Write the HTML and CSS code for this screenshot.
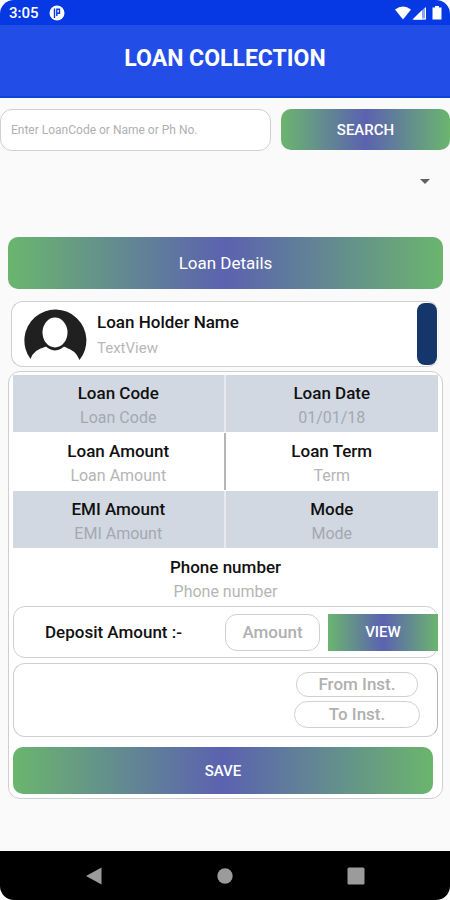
FILE: index.html
```html
<!DOCTYPE html>
<html lang="en">
<head>
<meta charset="utf-8">
<meta name="viewport" content="width=device-width, initial-scale=1">
<title>Loan Collection</title>
<link rel="stylesheet" href="styles.css">
</head>
<body>
<div class="screen">
  <div class="status">
    <span class="time">3:05</span>
    <svg class="app-icon" width="16" height="16" viewBox="0 0 16 16" aria-hidden="true"><circle cx="8" cy="8" r="7.500" fill="#fff"/><path d="M5.500 3.500V13M8.500 8.300H10.500V4.300H7.800V11" fill="none" stroke="#0638e4" stroke-width="1.400"/></svg>
    <svg class="signals" width="48" height="16" viewBox="0 0 48 16" aria-hidden="true">
      <path d="M0 4.500Q8 -1.500 16 4.500L8 14.500Z" fill="#fff"/>
      <path d="M17.500 14.500L31 1.500V14.500Z" fill="#fff" fill-opacity=".55"/><path d="M17.500 14.500L27 5.300V14.500Z" fill="#fff"/><path d="M30.500 3V14H19" fill="none" stroke="#fff"/>
      <path d="M40 1h4v1.500h2.500V14.500h-9V2.500H40Z" fill="#fff"/>
    </svg>
  </div>
  <header class="header"><h1>LOAN COLLECTION</h1></header>

  <main class="main">
    <form class="search">
      <input class="box search-input" type="text" aria-label="Loan search" placeholder="Enter LoanCode or Name or Ph No.">
      <button class="gradient search-button" type="button">SEARCH</button>
    </form>
    <div class="picker">
      <select aria-label="Loan"><option></option></select>
      <svg class="caret" width="10" height="5" viewBox="0 0 10 5" aria-hidden="true"><path d="M0 0H10L5 5Z" fill="#606060"/></svg>
    </div>

    <section class="details">
      <h2 class="gradient banner">Loan Details</h2>
      <div class="box holder">
        <svg class="avatar" width="64" height="56" viewBox="0 0 64 56" aria-hidden="true">
          <path d="M7.500 53A31 31 0 1 1 56.500 54Q53 44 41 41L23 41Q11 43 7.500 53Z" fill="#202020"/>
          <path d="M20 42L24 40Q32 47 40 40L44 42L32 50Z" fill="#fff"/>
          <ellipse cx="32" cy="27" rx="14.500" ry="17.500" fill="#202020"/>
          <ellipse cx="32" cy="26.500" rx="12.500" ry="15" fill="#fff"/>
        </svg>
        <div class="holder-text">
          <strong>Loan Holder Name</strong>
          <span class="small">TextView</span>
        </div>
        <div class="stripe"></div>
      </div>

      <div class="box card">
        <dl class="facts">
          <div class="fact split shaded"><dt>Loan Code</dt><dd>Loan Code</dd></div>
          <div class="fact shaded"><dt>Loan Date</dt><dd>01/01/18</dd></div>
          <div class="fact split"><dt>Loan Amount</dt><dd>Loan Amount</dd></div>
          <div class="fact"><dt>Loan Term</dt><dd>Term</dd></div>
          <div class="fact split shaded"><dt>EMI Amount</dt><dd>EMI Amount</dd></div>
          <div class="fact shaded"><dt>Mode</dt><dd>Mode</dd></div>
          <div class="fact wide"><dt>Phone number</dt><dd>Phone number</dd></div>
        </dl>
        <div class="box deposit">
          <label for="amount">Deposit Amount :-</label>
          <input class="box field amount" id="amount" type="text" placeholder="Amount">
          <button class="gradient view" type="button">VIEW</button>
        </div>
        <div class="box installments">
          <input class="box field from" type="text" aria-label="From installment" placeholder="From Inst.">
          <input class="box field to" type="text" aria-label="To installment" placeholder="To Inst.">
        </div>
        <button class="gradient save" type="button">SAVE</button>
      </div>
    </section>
  </main>

  <nav class="nav">
    <button type="button" aria-label="Back"><svg width="18" height="18" viewBox="0 0 18 18"><path d="M1 9L16.500 .5V17.500Z" fill="#9b9b9b"/></svg></button>
    <button type="button" aria-label="Home"><svg width="18" height="18" viewBox="0 0 18 18"><circle cx="9" cy="9" r="7.700" fill="#9b9b9b"/></svg></button>
    <button type="button" aria-label="Recent apps"><svg width="18" height="18" viewBox="0 0 18 18"><rect x=".5" y=".5" width="17" height="17" rx="1.500" fill="#9b9b9b"/></svg></button>
  </nav>
</div>
</body>
</html>
```
FILE: styles.css
```css
* { box-sizing: border-box; }
body { margin: 0; background: #fff; font-family: Roboto, "Liberation Sans", sans-serif; font-size: 17px; color: #111; }
h1, h2, dl, dd { margin: 0; }
button, input, select { font: inherit; margin: 0; }
button { border: 0; padding: 0; }

.screen { display: flex; flex-direction: column; min-height: 100vh; background: #fafafa; border-radius: 14px; overflow: hidden; }

.status { display: flex; align-items: center; height: 25px; padding: 1px 7px 0 9px; background: #0638e4; color: #fff; }
.time { font-size: 15px; font-weight: 500; }
.app-icon { margin-left: 10px; }
.signals { margin-left: auto; }

.header { display: flex; align-items: center; justify-content: center; height: 73px; padding-bottom: 4px; background: #224de6; border-bottom: 2px solid #0d43d8; color: #fff; }
.header h1 { font-size: 23px; font-weight: 700; line-height: 28px; }

.main { flex: 1; }
.box { background: #fff; border: 1px solid #cfcfcf; border-radius: 12px; }
.gradient { background: linear-gradient(90deg, #6bb56e, #5b62b0, #6bb56e); color: #fff; border-radius: 10px; font-weight: 500; text-align: center; }

.search { display: flex; gap: 10px; padding-top: 11px; }
.search-input { flex: 1; min-width: 0; height: 42px; padding: 0 10px; font-size: 12px; }
.search-button { width: 169px; height: 41px; font-size: 15px; }
::placeholder { color: #b0b0b0; opacity: 1; }

.picker { position: relative; height: 61px; }
.picker select { width: 100%; height: 61px; border: 0; background: none; appearance: none; }
.caret { position: absolute; right: 20px; top: 28px; pointer-events: none; }

.details { padding: 25px 7px 0 8px; }
.banner { height: 52px; line-height: 52px; font-size: 17px; font-weight: 400; }

.holder { display: flex; align-items: center; height: 66px; margin: 12px 4px 4px 3px; padding: 0 1px 0 11px; border-right-color: #eee; }
.holder-text { flex: 1; display: flex; flex-direction: column; gap: 5px; padding-left: 10px; }
.holder-text strong { font-weight: 500; line-height: 22px; }
.small { font-size: 15px; line-height: 20px; color: #b8b8b8; }
.stripe { width: 20px; height: 62px; border-radius: 8px; background: #14366b; }

.card { padding: 3px 4px 4px; }
.facts { display: grid; grid-template-columns: 1fr 1fr; row-gap: 1px; }
.fact { display: flex; flex-direction: column; height: 57px; padding-top: 6px; text-align: center; }
.split { border-right: 2px solid #b5b5b5; }
.split.shaded { border-right-color: #e6ebf1; }
.shaded { background: #d1d8e1; }
.fact dt { font-weight: 500; line-height: 25px; }
.fact dd { font-size: 16px; line-height: 24px; color: #b5b5b5; }
.fact.shaded dd { color: #a3a9b1; }
.wide { grid-column: 1 / -1; }

.deposit { display: flex; align-items: center; height: 52px; padding-left: 31px; }
.deposit label { flex: 1; font-weight: 500; }
.field { font-weight: 500; text-align: center; padding: 0; min-width: 0; }
.amount { width: 95px; height: 37px; margin-right: 8px; }
.view { width: 110px; height: 37px; margin-right: -1px; border-radius: 0; font-size: 15px; }

.installments { display: flex; flex-direction: column; align-items: flex-end; gap: 4px; height: 74px; margin: 5px 0 10px; padding: 8px 17px 8px 0; border-right-color: #b5b5b5; }
.from { width: 122px; height: 25px; margin-right: 2px; }
.to { width: 126px; height: 28px; border-radius: 14px; }

.save { display: block; width: calc(100% - 5px); height: 47px; font-size: 15px; }

.nav { display: flex; justify-content: space-between; align-items: center; height: 49px; padding: 0 85px; background: #000; }
.nav button { display: flex; background: none; }
```
